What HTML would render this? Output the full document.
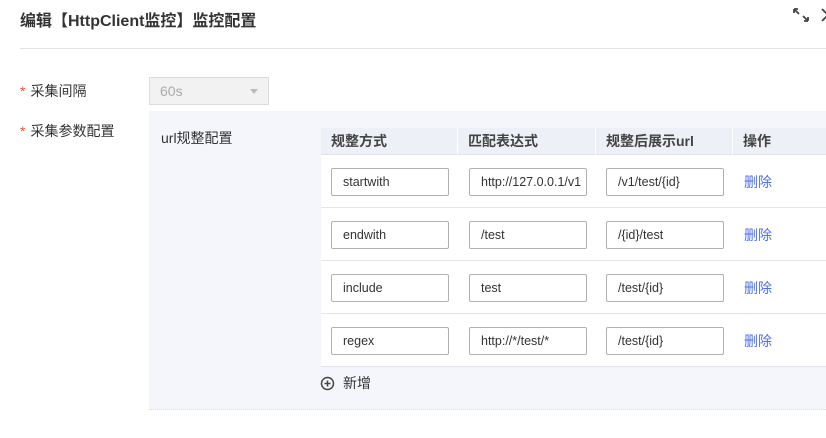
<!DOCTYPE html>
<html><head><meta charset="utf-8"><style>
*{margin:0;padding:0;box-sizing:border-box}
body{width:826px;height:438px;overflow:hidden;background:#fff;font-family:"Liberation Sans","Noto Sans CJK SC",sans-serif;font-size:14px;color:#333;position:relative}
.a{position:absolute}
.title{left:20px;top:7px;font-size:16px;font-weight:bold;color:#333}
.hr{left:20px;top:48px;width:806px;height:1px;background:#e3e3e3}
.lbl{left:20px;font-size:14px;color:#333;line-height:16px}
.lbl b{color:#f0503c;font-weight:normal;margin-right:5px}
.sel{left:149px;top:77px;width:120px;height:28px;background:#f2f2f2;border:1px solid #dcdcdc;color:#aaa;padding:5px 10px}
.tri{right:10px;top:11px;width:0;height:0;border-left:4px solid transparent;border-right:4px solid transparent;border-top:5px solid #bbb}
.panel{left:149px;top:111px;width:677px;height:299px;background:#f5f6fb;border-bottom:1px dotted #ddd}
.th{top:128px;height:27px;background:#eef0f8;border-bottom:1px solid #e0e2ea;font-weight:bold;color:#444;padding:3px 10px;font-size:14px}
.row{left:321px;width:505px;height:53px;background:#fff;border-bottom:1px solid #e3e5ec}
.in{height:28px;width:118px;border:1px solid #b0b0b0;border-radius:2px;padding:6px 11px;color:#333;background:#fff;white-space:nowrap;overflow:hidden;font-size:12.5px}
.del{color:#4e6ef2;font-size:14px;line-height:16px}
</style></head><body>
<div class="a title">编辑【HttpClient监控】监控配置</div>
<svg class="a" style="left:792px;top:7px" width="20" height="18" viewBox="0 0 20 18"><path d="M2 2l5 5M2 2h4M2 2v4M16 14l-5-5M16 14h-4M16 14v-4" stroke="#444" stroke-width="1.8" fill="none"/></svg>
<svg class="a" style="left:820px;top:7px" width="8" height="18"><path d="M2 2l5 5M2 14l5-5" stroke="#444" stroke-width="1.8" fill="none"/></svg>
<div class="a hr"></div>
<div class="a lbl" style="top:83px"><b>*</b>采集间隔</div>
<div class="a sel">60s<div class="a tri"></div></div>
<div class="a lbl" style="top:123px"><b>*</b>采集参数配置</div>
<div class="a panel"></div>
<div class="a" style="left:161px;top:130px;line-height:16px">url规整配置</div>
<div class="a th" style="left:321px;width:137px;border-right:1px solid #fff">规整方式</div>
<div class="a th" style="left:458px;width:138px;border-right:1px solid #fff">匹配表达式</div>
<div class="a th" style="left:596px;width:137px;border-right:1px solid #fff">规整后展示url</div>
<div class="a th" style="left:733px;width:93px">操作</div>

<div class="a row" style="top:155px"></div>
<div class="a row" style="top:208px"></div>
<div class="a row" style="top:261px"></div>
<div class="a row" style="top:314px"></div>

<div class="a in" style="left:331px;top:168px">startwith</div>
<div class="a in" style="left:469px;top:168px">http://127.0.0.1/v1</div>
<div class="a in" style="left:606px;top:168px">/v1/test/{id}</div>
<div class="a del" style="left:744px;top:174px">删除</div>

<div class="a in" style="left:331px;top:221px">endwith</div>
<div class="a in" style="left:469px;top:221px">/test</div>
<div class="a in" style="left:606px;top:221px">/{id}/test</div>
<div class="a del" style="left:744px;top:227px">删除</div>

<div class="a in" style="left:331px;top:274px">include</div>
<div class="a in" style="left:469px;top:274px">test</div>
<div class="a in" style="left:606px;top:274px">/test/{id}</div>
<div class="a del" style="left:744px;top:280px">删除</div>

<div class="a in" style="left:331px;top:327px">regex</div>
<div class="a in" style="left:469px;top:327px">http://*/test/*</div>
<div class="a in" style="left:606px;top:327px">/test/{id}</div>
<div class="a del" style="left:744px;top:333px">删除</div>

<svg class="a" style="left:320px;top:376px" width="15" height="15" viewBox="0 0 15 15"><circle cx="7.5" cy="7.5" r="6" stroke="#444" stroke-width="1.5" fill="none"/><path d="M4.5 7.5h6M7.5 4.5v6" stroke="#444" stroke-width="1.5"/></svg>
<div class="a" style="left:343px;top:375px;font-size:14px;line-height:16px">新增</div>
</body></html>
